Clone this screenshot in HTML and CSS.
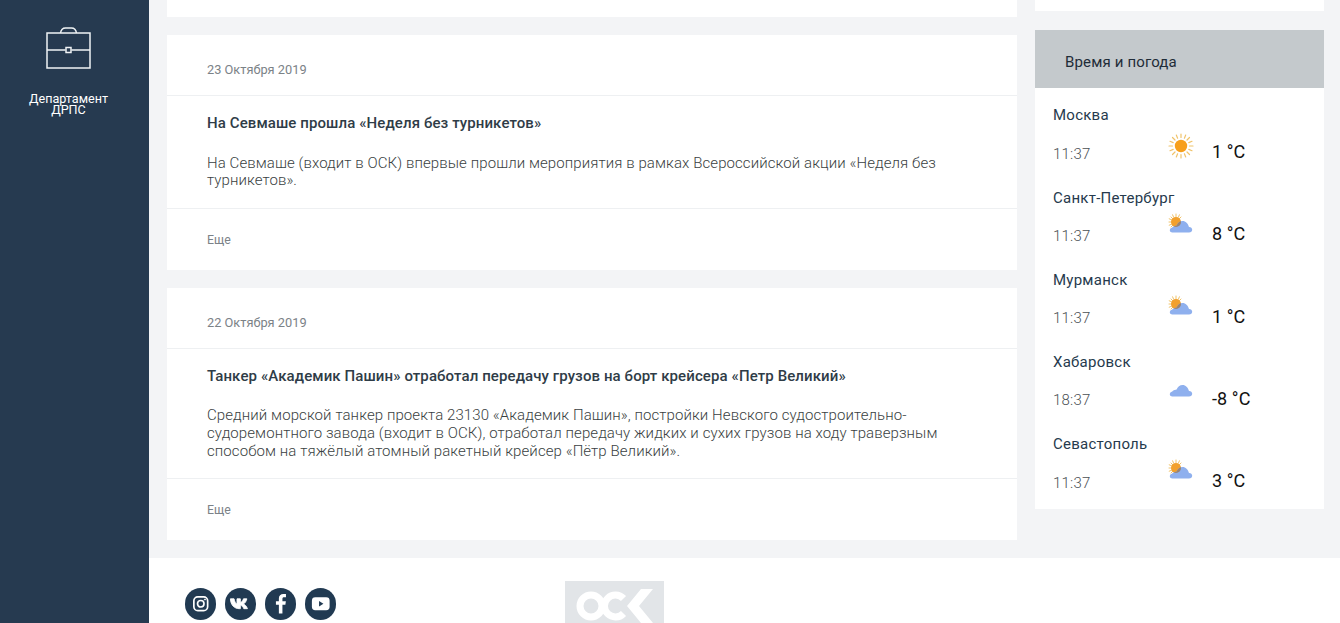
FILE: index.html
```html
<!DOCTYPE html>
<html lang="ru">
<head>
<meta charset="utf-8">
<title>Новости</title>
<link rel="stylesheet" href="styles.css">
</head>
<body>
<svg class="defs" width="0" height="0" aria-hidden="true">
  <defs>
    <path id="cloud" d="M5.500 19.600H21c2 0 3.200-1.200 3.200-2.800 0-1.800-1.400-3-3.200-2.900-1-3.500-3.400-5.900-6.400-5.900-2.800 0-5 1.800-6 4.600-.6.400-1.100.400-2 .500-1.400.500-1.800.900-2.300 1.500-1.700.400-2.500 1.600-2.500 2.800 0 1.400 1.600 2.200 3.700 2.200z" fill="#8fb0ee"/>
    <clipPath id="cloudclip"><use href="#cloud"/></clipPath>
    <g id="sun" transform="translate(0 3)">
      <g stroke="#f0c36a" stroke-width="1.200" stroke-linecap="round">
        <path d="M13 1v3.500M13 21.500v3.500M1 13h3.500M21.500 13H25M4.500 4.500l2.500 2.500M19 19l2.500 2.500M4.500 21.500L7 19M19 7l2.500-2.500M8.300 2l1.300 3.200M16.400 20.800l1.300 3.200M2 8.300l3.200 1.300M20.800 16.400l3.200 1.300M2 17.700l3.200-1.300M20.800 9.600L24 8.300M8.300 24l1.300-3.200M16.400 5.200L17.700 2"/>
      </g>
      <circle cx="13" cy="13" r="6.200" fill="#f79f1b"/>
    </g>
    <g id="suncloud">
      <g stroke="#f0c36a" stroke-width="1" stroke-linecap="round">
        <path d="M8 1v3M1 9h3M3 4l2 2M13 4l-2 2M3 14l2-2M4.600 1.800l1 2.400M11.400 1.800l-1 2.400M1.200 5.800l2.400 1M1.200 12.200l2.400-1"/>
      </g>
      <circle cx="8" cy="9" r="5" fill="#f2a02c"/>
      <use href="#cloud"/>
      <circle cx="8" cy="9" r="5" fill="#9c8470" clip-path="url(#cloudclip)"/>
    </g>
  </defs>
</svg>

<div class="layout">
  <aside class="sidebar">
    <svg class="case" width="46" height="42" viewBox="0 0 46 42" fill="none" stroke="#f0f3f5" stroke-width="1.500">
      <rect x="1" y="6" width="43" height="35"/>
      <path d="M1 23h18.500M25.500 23H44M14.500 6c.6-3.600 2.300-5 5-5h6c2.700 0 4.400 1.400 5 5"/>
      <rect x="20" y="20.500" width="5" height="5"/>
    </svg>
    <div class="dept">Департамент<br>ДРПС</div>
  </aside>

  <div class="content">
    <div class="columns">
      <main class="news">
        <div class="stub stub-news"></div>

        <article class="card">
          <div class="date">23 Октября 2019</div>
          <div class="body">
            <h2 class="title">На Севмаше прошла «Неделя без турникетов»</h2>
            <p class="text">На Севмаше (входит в ОСК) впервые прошли мероприятия в рамках Всероссийской акции «Неделя без турникетов».</p>
          </div>
          <div class="more">Еще</div>
        </article>

        <article class="card">
          <div class="date">22 Октября 2019</div>
          <div class="body">
            <h2 class="title">Танкер «Академик Пашин» отработал передачу грузов на борт крейсера «Петр Великий»</h2>
            <p class="text">Средний морской танкер проекта 23130 «Академик Пашин», постройки Невского судостроительно-судоремонтного завода (входит в ОСК), отработал передачу жидких и сухих грузов на ходу траверзным способом на тяжёлый атомный ракетный крейсер «Пётр Великий».</p>
          </div>
          <div class="more">Еще</div>
        </article>
      </main>

      <aside class="side">
        <div class="stub stub-side"></div>
        <section class="weather">
          <h3 class="weather-head">Время и погода</h3>
          <div class="cities">
            <div class="city">
              <div class="city-name">Москва</div>
              <div class="time">11:37</div>
              <svg class="wicon" width="26" height="30" viewBox="0 0 26 30"><use href="#sun"/></svg>
              <div class="temp">1 °C</div>
            </div>
            <div class="city">
              <div class="city-name">Санкт-Петербург</div>
              <div class="time">11:37</div>
              <svg class="wicon" width="26" height="30" viewBox="0 0 26 30"><use href="#suncloud"/></svg>
              <div class="temp">8 °C</div>
            </div>
            <div class="city">
              <div class="city-name">Мурманск</div>
              <div class="time">11:37</div>
              <svg class="wicon" width="26" height="30" viewBox="0 0 26 30"><use href="#suncloud"/></svg>
              <div class="temp">1 °C</div>
            </div>
            <div class="city">
              <div class="city-name">Хабаровск</div>
              <div class="time">18:37</div>
              <svg class="wicon" width="26" height="30" viewBox="0 0 26 30"><use href="#cloud"/></svg>
              <div class="temp">-8 °C</div>
            </div>
            <div class="city">
              <div class="city-name">Севастополь</div>
              <div class="time">11:37</div>
              <svg class="wicon" width="26" height="30" viewBox="0 0 26 30"><use href="#suncloud"/></svg>
              <div class="temp">3 °C</div>
            </div>
          </div>
        </section>
      </aside>
    </div>

    <footer class="footer">
      <div class="social">
        <span class="soc">
          <svg width="32" height="32" viewBox="0 0 32 32" fill="none" stroke="#fff" stroke-width="1.700"><rect x="9" y="9" width="14" height="14" rx="4"/><circle cx="16" cy="16" r="3.300"/><circle cx="20.300" cy="11.700" r=".6" fill="#fff" stroke-width=".8"/></svg>
        </span>
        <span class="soc">
          <svg width="32" height="32" viewBox="0 0 32 32"><path fill="#fff" stroke="#fff" stroke-width=".9" stroke-linejoin="round" d="M5.500 11h3.700c.4 2.600 1.700 5 3 5.400V11h3.400v3.800c1.300-.2 2.500-1.700 3.200-3.800h3.400c-.5 2.500-2 4.400-3.300 5.200 1.400.7 3 2.300 3.900 4.800h-3.700c-.7-1.900-2-3.200-3.500-3.400V21h-1c-5.200 0-8.800-3.700-9.100-10z"/></svg>
        </span>
        <span class="soc">
          <svg width="32" height="32" viewBox="0 0 32 32"><path fill="#fff" d="M17.700 26v-9h3l.5-3.600h-3.500v-2.200c0-1.100.3-1.700 1.800-1.700h1.800V6.200c-.4 0-1.500-.2-2.700-.2-2.700 0-4.500 1.600-4.500 4.600v2.800h-3V17h3v9z"/></svg>
        </span>
        <span class="soc">
          <svg width="32" height="32" viewBox="0 0 32 32"><rect x="7" y="9.500" width="18" height="13" rx="3.500" fill="#fff"/><path d="M14.300 13.300l4.400 2.700-4.400 2.700z" fill="#213a52"/></svg>
        </span>
      </div>
      <div class="logo">
        <svg width="99" height="42" viewBox="0 0 99 42">
          <g fill="none" stroke="#fff" stroke-width="7">
            <circle cx="26" cy="25" r="11"/>
            <path d="M58.500 17.500a11 11 0 1 0 0 15"/>
          </g>
          <path d="M62 25L76 8h12L74 25l14 17H76z" fill="#fff"/>
        </svg>
      </div>
    </footer>
  </div>
</div>
</body>
</html>
```

FILE: styles.css
```css
* {
  box-sizing: border-box;
}

html,
body {
  margin: 0;
  height: 623px;
  overflow: hidden;
}

body {
  background: #f3f4f6;
  font-family: Roboto, "Liberation Sans", sans-serif;
  color: #263a4d;
}

.defs {
  display: block;
  height: 0;
}

.layout {
  display: flex;
  height: 623px;
}

.sidebar {
  flex: 0 0 149px;
  background: #263a50;
  display: flex;
  flex-direction: column;
  align-items: center;
  padding: 27px 12px 0 0;
}

.case {
  display: block;
}

.dept {
  margin-top: 24px;
  color: #fff;
  font-size: 12.600px;
  line-height: 11.300px;
  text-align: center;
}

.content {
  flex: 1;
  min-width: 0;
  display: flex;
  flex-direction: column;
}

.columns {
  display: flex;
  gap: 18px;
  padding: 0 16px 18px 18px;
}

.news {
  flex: 0 0 850px;
  display: flex;
  flex-direction: column;
  gap: 18px;
}

.stub {
  background: #fff;
}

.stub-news {
  height: 17px;
}

.stub-side {
  height: 11px;
}

.card {
  background: #fff;
}

.date {
  height: 61px;
  padding: 27px 40px 0;
  border-bottom: 1px solid #eef0f2;
  font-size: 12.800px;
  line-height: 15px;
  color: #7b8287;
}

.body {
  padding: 18px 40px 17.300px;
  border-bottom: 1px solid #eef0f2;
}

.title {
  margin: 0 0 22.700px;
  font-size: 15px;
  line-height: 18px;
  font-weight: 500;
  letter-spacing: .1px;
  color: #2f3c47;
}

.text {
  margin: 0;
  font-size: 15px;
  line-height: 17.800px;
  font-weight: 300;
  letter-spacing: .09px;
  color: #3a3f42;
}

.more {
  height: 61px;
  padding: 24px 0 0 40px;
  font-size: 12.300px;
  line-height: 15px;
  color: #7b8287;
}

.side {
  flex: 0 0 289px;
  display: flex;
  flex-direction: column;
  gap: 19px;
}

.weather {
  background: #fff;
}

.weather-head {
  margin: 0;
  height: 58px;
  padding: 0 30px;
  background: #c4c9cc;
  font-size: 15px;
  line-height: 65px;
  font-weight: 400;
  letter-spacing: .15px;
  color: #1f2c38;
}

.cities {
  padding: 15.400px 18px 8.600px;
}

.city {
  display: grid;
  grid-template-columns: 115px 44px 1fr;
  grid-template-rows: 24px 44px;
  margin-bottom: 14.250px;
}

.city:last-child {
  margin-bottom: 0;
}

.city-name {
  grid-column: 1 / -1;
  font-size: 15px;
  line-height: 24px;
  letter-spacing: .25px;
  color: #263a4d;
}

.time {
  font-size: 15px;
  font-weight: 300;
  line-height: 28px;
  padding-top: 12.200px;
  letter-spacing: .2px;
  color: #4a4f53;
}

.wicon {
  display: block;
  margin-top: 3px;
}

.temp {
  font-size: 18px;
  line-height: 26px;
  padding-top: 11.700px;
  letter-spacing: .1px;
  color: #111;
}

.footer {
  flex: 1;
  background: #fff;
  display: flex;
  align-items: flex-start;
  padding: 23px 0 0 35.500px;
}

.social {
  display: flex;
  gap: 8.500px;
  margin-top: 7.500px;
}

.soc {
  width: 31.500px;
  height: 31.500px;
  border-radius: 50%;
  background: #213a52;
  display: block;
}

.soc svg {
  display: block;
  width: 100%;
  height: 100%;
}

.logo {
  margin-left: 229px;
  width: 99px;
  height: 42px;
  background: #e2e5e8;
  overflow: hidden;
}

.logo svg {
  display: block;
}
```
